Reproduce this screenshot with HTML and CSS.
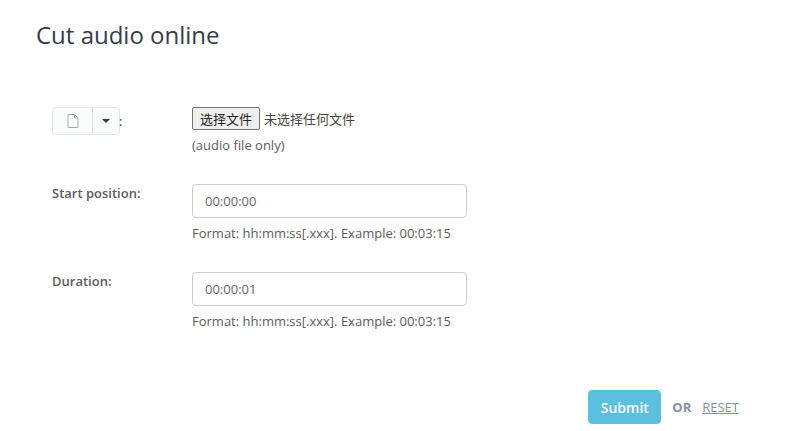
FILE: index.html
```html
<!DOCTYPE html>
<html>
   <head>
      <meta charset="UTF-8">
      <title>Cut audio online</title>
      <link rel="stylesheet" href="styles.css">
   </head>
   <body>
      <h1 class="page-title">Cut audio online</h1>

      <form class="cut-form">
         <div class="form-row row-file">
            <div class="form-label label-file">
               <div class="btn-group">
                  <span class="btn-part btn-icon">
                     <svg width="12" height="14" viewBox="0 0 12 14">
                        <path d="M1 .5h6.5L11 4v9.5H1z M7.5 .5V4H11" fill="#fff" stroke="#a3a8b1" stroke-width="1"/>
                     </svg>
                  </span>
                  <span class="btn-part btn-caret"><span class="caret"></span></span>
               </div>
               <span class="colon">:</span>
            </div>
            <div class="form-field">
               <div class="file-line">
                  <button type="button" class="file-button">选择文件</button>
                  <span class="file-name">未选择任何文件</span>
               </div>
               <div class="hint hint-file">(audio file only)</div>
            </div>
         </div>

         <div class="form-row">
            <label class="form-label">Start position:</label>
            <div class="form-field">
               <input class="text-input" type="text" value="00:00:00">
               <div class="hint">Format: hh:mm:ss[.xxx]. Example: 00:03:15</div>
            </div>
         </div>

         <div class="form-row">
            <label class="form-label">Duration:</label>
            <div class="form-field">
               <input class="text-input" type="text" value="00:00:01">
               <div class="hint">Format: hh:mm:ss[.xxx]. Example: 00:03:15</div>
            </div>
         </div>

         <div class="form-actions">
            <button type="button" class="submit-button">Submit</button>
            <span class="or-text">OR</span>
            <a class="reset-link" href="#">RESET</a>
         </div>
      </form>
   </body>
</html>
```

FILE: styles.css
```css
*
{
   box-sizing: border-box;
}

html, body
{
   height: 100%;
}

body
{
   margin: 0;
   padding: 20px 55px 0 36px;
   background: #ffffff;
   color: #5c5c5c;
   font-family: "Open Sans", "Noto Sans CJK SC", sans-serif;
   font-size: 13px;
   overflow: hidden;
}

.page-title
{
   margin: 0;
   font-size: 24px;
   font-weight: 400;
   line-height: 30px;
   color: #353c4a;
}

.cut-form
{
   margin-top: 57px;
   padding-left: 16px;
}

.form-row
{
   display: flex;
   margin-bottom: 30px;
}

.form-label
{
   width: 140px;
   flex: none;
   font-weight: 600;
   line-height: 18px;
}

.label-file
{
   display: flex;
   font-weight: 400;
}

.btn-group
{
   display: flex;
   width: 68px;
   height: 28px;
   border: 1px solid #dfe7f1;
   border-radius: 4px;
   background: #fbfcfd;
}

.btn-part
{
   display: flex;
   align-items: center;
   justify-content: center;
}

.btn-icon
{
   width: 40px;
   border-right: 1px solid #d3e0ee;
}

.btn-caret
{
   flex: 1;
}

.caret
{
   border-top: 4px solid #333a47;
   border-left: 4px solid transparent;
   border-right: 4px solid transparent;
}

.colon
{
   margin-left: -1px;
   line-height: 28px;
   color: #333333;
}

.file-line
{
   display: flex;
   align-items: center;
   height: 23px;
}

.file-button
{
   height: 23px;
   width: 68px;
   padding: 0;
   border: 1px solid #767676;
   border-radius: 2px;
   background: #efefef;
   color: #222222;
   font-family: "Noto Sans CJK SC", sans-serif;
   font-size: 13px;
}

.file-name
{
   margin-left: 4px;
   color: #444444;
   font-family: "Noto Sans CJK SC", sans-serif;
}

.hint
{
   margin-top: 6px;
   line-height: 18px;
   font-size: 13px;
}

.text-input
{
   display: block;
   width: 275px;
   height: 34px;
   padding: 0 12px;
   border: 1px solid #cccccc;
   border-radius: 4px;
   color: #666666;
   font-family: inherit;
   font-size: 13px;
}

.form-actions
{
   display: flex;
   align-items: center;
   justify-content: flex-end;
   margin-top: 60px;
}

.submit-button
{
   width: 73px;
   height: 34px;
   border: 1px solid #5bc0de;
   border-radius: 4px;
   background: #5bc0de;
   color: #ffffff;
   font-family: inherit;
   font-size: 14px;
   font-weight: 600;
}

.or-text
{
   margin-left: 11px;
   color: #8391a8;
   font-weight: 700;
   font-size: 13px;
}

.reset-link
{
   margin-left: 11px;
   color: #8391a8;
   font-size: 13px;
}
```
